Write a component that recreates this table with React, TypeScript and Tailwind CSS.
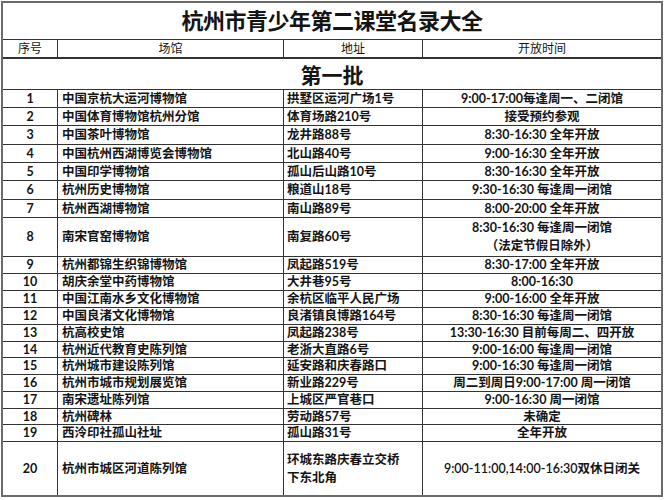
import React from 'react';

type Row = {
  no: string;
  name: string;
  addr: string[];
  time: string[];
  h: string;
  thin?: boolean;
};

const rows: Row[] = [
  { no: '1', name: '中国京杭大运河博物馆', addr: ['拱墅区运河广场1号'], time: ['9:00-17:00每逢周一、二闭馆'], h: 'h-[18px]' },
  { no: '2', name: '中国体育博物馆杭州分馆', addr: ['体育场路210号'], time: ['接受预约参观'], h: 'h-[18px]' },
  { no: '3', name: '中国茶叶博物馆', addr: ['龙井路88号'], time: ['8:30-16:30 全年开放'], h: 'h-[19px]' },
  { no: '4', name: '中国杭州西湖博览会博物馆', addr: ['北山路40号'], time: ['9:00-16:30 全年开放'], h: 'h-[18px]' },
  { no: '5', name: '中国印学博物馆', addr: ['孤山后山路10号'], time: ['8:30-16:30 全年开放'], h: 'h-[18px]' },
  { no: '6', name: '杭州历史博物馆', addr: ['粮道山18号'], time: ['9:30-16:30 每逢周一闭馆'], h: 'h-[19px]' },
  { no: '7', name: '杭州西湖博物馆', addr: ['南山路89号'], time: ['8:00-20:00 全年开放'], h: 'h-[18px]' },
  { no: '8', name: '南宋官窑博物馆', addr: ['南复路60号'], time: ['8:30-16:30 每逢周一闭馆', '（法定节假日除外）'], h: 'h-[39px]' },
  { no: '9', name: '杭州都锦生织锦博物馆', addr: ['凤起路519号'], time: ['8:30-17:00 全年开放'], h: 'h-[17px]' },
  { no: '10', name: '胡庆余堂中药博物馆', addr: ['大井巷95号'], time: ['8:00-16:30'], h: 'h-[17px]' },
  { no: '11', name: '中国江南水乡文化博物馆', addr: ['余杭区临平人民广场'], time: ['9:00-16:00 全年开放'], h: 'h-[17px]' },
  { no: '12', name: '中国良渚文化博物馆', addr: ['良渚镇良博路164号'], time: ['8:30-16:30 每逢周一闭馆'], h: 'h-[17px]' },
  { no: '13', name: '杭高校史馆', addr: ['凤起路238号'], time: ['13:30-16:30 目前每周二、四开放'], h: 'h-[17px]' },
  { no: '14', name: '杭州近代教育史陈列馆', addr: ['老浙大直路6号'], time: ['9:00-16:00 每逢周一闭馆'], h: 'h-[16px]' },
  { no: '15', name: '杭州城市建设陈列馆', addr: ['延安路和庆春路口'], time: ['9:00-16:30 每逢周一闭馆'], h: 'h-[17px]' },
  { no: '16', name: '杭州市城市规划展览馆', addr: ['新业路229号'], time: ['周二到周日9:00-17:00 周一闭馆'], h: 'h-[17px]' },
  { no: '17', name: '南宋遗址陈列馆', addr: ['上城区严官巷口'], time: ['9:00-16:30 周一闭馆'], h: 'h-[17px]' },
  { no: '18', name: '杭州碑林', addr: ['劳动路57号'], time: ['未确定'], h: 'h-[16px]' },
  { no: '19', name: '西泠印社孤山社址', addr: ['孤山路31号'], time: ['全年开放'], h: 'h-[17px]' },
  { no: '20', name: '杭州市城区河道陈列馆', addr: ['环城东路庆春立交桥', '下东北角'], time: ['9:00-11:00,14:00-16:30双休日闭关'], h: 'h-[53px]', thin: true },
];

const cols = 'grid grid-cols-[55px_226px_139px_1fr]';

export default function App() {
  return (
    <div
      className="min-h-[500px] w-[665px] bg-white px-[1px] pt-[1px] text-[#141414]"
      style={{ fontFamily: 'Lato, "Noto Sans CJK SC", sans-serif' }}
    >
      <div className="w-[662px] border-2 border-[#6b6b6b]">
        {/* title */}
        <div className="flex h-[37px] items-center justify-center border-b border-[#333] text-[22px] font-bold leading-none tracking-[-0.5px]">
          杭州市青少年第二课堂名录大全
        </div>

        {/* header */}
        <div className={`${cols} h-[19px] border-b-2 border-[#333] text-[12px] leading-none`}>
          <div className="flex items-center justify-center border-r border-[#333]">序号</div>
          <div className="flex items-center justify-center border-r border-[#333]">场馆</div>
          <div className="flex items-center justify-center border-r border-[#333]">地址</div>
          <div className="flex items-center justify-center">开放时间</div>
        </div>

        {/* batch */}
        <div className="flex h-[31px] items-center justify-center border-b border-[#333] text-[21px] font-bold leading-none">
          第一批
        </div>

        {rows.map((r, i) => (
          <div
            key={r.no}
            className={`${cols} ${r.h} ${i < rows.length - 1 ? 'border-b border-[#333]' : ''} text-[12.5px] font-bold leading-[14px]`}
          >
            <div className="flex items-center justify-center border-r border-[#333]">{r.no}</div>
            <div className="flex items-center border-r border-[#333] pl-[4px] whitespace-nowrap">{r.name}</div>
            <div className="flex flex-col justify-center border-r border-[#333] pl-[3px] whitespace-nowrap">
              {r.addr.map((a) => (
                <span key={a} className={r.addr.length > 1 ? 'leading-[18px]' : ''}>{a}</span>
              ))}
            </div>
            <div
              className={`flex flex-col items-center justify-center whitespace-nowrap ${r.thin ? 'font-semibold' : ''} ${r.time.length > 1 ? 'leading-[18px]' : ''}`}
            >
              {r.time.map((t) => (
                <span key={t}>{t}</span>
              ))}
            </div>
          </div>
        ))}
      </div>
    </div>
  );
}
